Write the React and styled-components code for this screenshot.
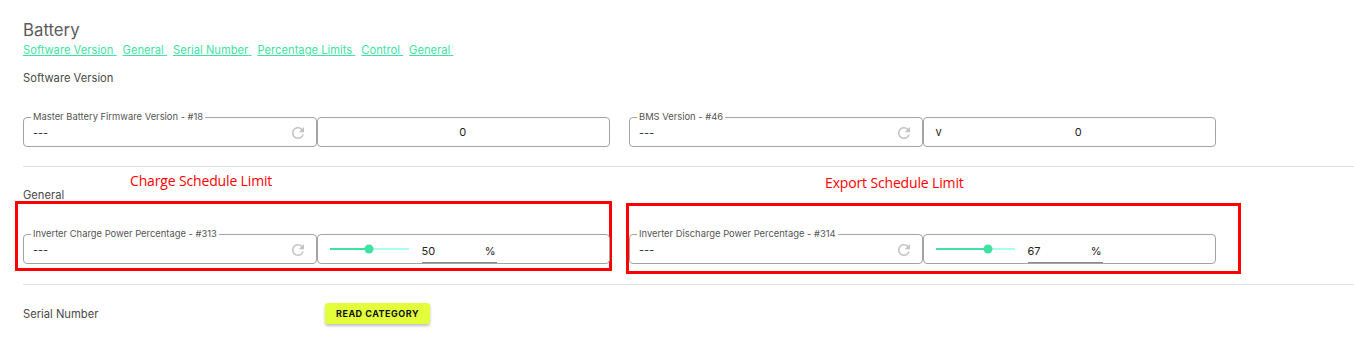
import React from 'react'
import styled, { createGlobalStyle } from 'styled-components'
import { MdRefresh } from 'react-icons/md'

const GlobalStyle = createGlobalStyle`
  body {
    margin: 0;
    background: #ffffff;
    font-family: Inter, 'Open Sans', Arial, sans-serif;
    color: #444;
  }
`

const links = [
  'Software Version',
  'General',
  'Serial Number',
  'Percentage Limits',
  'Control',
  'General',
]

function RefreshField({ label, value }) {
  return (
    <OutlinedBox>
      <Legend>{label}</Legend>
      <Value>{value}</Value>
      <RefreshIcon size={18} />
    </OutlinedBox>
  )
}

function SliderBox({ value }) {
  return (
    <ControlBox>
      <Track>
        <TrackFill style={{ width: `${value}%` }} />
        <Thumb style={{ left: `${value}%` }} />
      </Track>
      <NumberInput>
        <span>{value}</span>
        <span>%</span>
      </NumberInput>
    </ControlBox>
  )
}

function App() {
  return (
    <Page>
      <GlobalStyle />
      <Title>Battery</Title>
      <LinkRow>
        {links.map((l, i) => (
          <Link key={i}>{l}&nbsp;</Link>
        ))}
      </LinkRow>

      <Section>
        <SectionHeading>Software Version</SectionHeading>
        <FieldRow>
          <Group>
            <RefreshField label='Master Battery Firmware Version - #18' value='---' />
            <ControlBox>
              <CenterValue>0</CenterValue>
            </ControlBox>
          </Group>
          <Group>
            <RefreshField label='BMS Version - #46' value='---' />
            <ControlBox>
              <Adornment>v</Adornment>
              <CenterValue>0</CenterValue>
            </ControlBox>
          </Group>
        </FieldRow>
      </Section>
      <Divider />

      <Section>
        <SectionHeading $gap={32}>General</SectionHeading>
        <FieldRow>
          <Group>
            <Annotation $left={-8} $top={-33} $width={597} $height={70} />
            <AnnotationLabel $left={107} $top={-63}>Charge Schedule Limit</AnnotationLabel>
            <RefreshField label='Inverter Charge Power Percentage - #313' value='---' />
            <SliderBox value={50} />
          </Group>
          <Group>
            <Annotation $left={-3} $top={-31} $width={615} $height={71} />
            <AnnotationLabel $left={196} $top={-61}>Export Schedule Limit</AnnotationLabel>
            <RefreshField label='Inverter Discharge Power Percentage - #314' value='---' />
            <SliderBox value={67} />
          </Group>
        </FieldRow>
      </Section>
      <Divider $gap={20} />

      <CategoryRow>
        <CategoryName>Serial Number</CategoryName>
        <ReadButton>Read Category</ReadButton>
      </CategoryRow>
    </Page>
  )
}

export default App

const Page = styled.div`
  padding: 20px 0 20px 23px;
`

const Title = styled.div`
  font-size: 16.8px;
  line-height: 20px;
  color: #5c5c5c;
`

const LinkRow = styled.div`
  display: flex;
  gap: 6px;
  margin-top: 3px;
  line-height: 14px;
`

const Link = styled.a`
  font-size: 11.2px;
  color: #3ee3a3;
  text-decoration: underline;
  cursor: pointer;
`

const Section = styled.div``

const SectionHeading = styled.div`
  font-size: 11.2px;
  line-height: 14px;
  color: #4a4a4a;
  margin-top: ${(p) => (p.$gap ? 21 : 14)}px;
  margin-bottom: ${(p) => p.$gap || 32}px;
`

const FieldRow = styled.div`
  display: flex;
  gap: 19px;
`

const Group = styled.div`
  position: relative;
  display: grid;
  grid-template-columns: 1fr 1fr;
  width: 587px;
`

const OutlinedBox = styled.div`
  position: relative;
  height: 30px;
  box-sizing: border-box;
  border: 1px solid #a3a3a3;
  border-radius: 4px;
  display: flex;
  align-items: center;
  padding: 2px 9px 0 9px;
`

const ControlBox = styled(OutlinedBox)`
  padding: 0 13px 0 12px;
  gap: 13px;
`

const Legend = styled.span`
  position: absolute;
  top: -7px;
  left: 7px;
  padding: 0 2px;
  background: #fff;
  font-size: 9.4px;
  line-height: 12px;
  color: #555;
`

const Value = styled.span`
  flex: 1;
  font-size: 11px;
  color: #333;
`

const RefreshIcon = styled(MdRefresh)`
  color: #c2c2c2;
`

const CenterValue = styled.span`
  flex: 1;
  text-align: center;
  font-size: 11px;
  color: #222;
`

const Adornment = styled.span`
  font-size: 11px;
  color: #222;
`

const Track = styled.div`
  position: relative;
  width: 79px;
  height: 2px;
  background: #a9fbf3;
`

const TrackFill = styled.div`
  height: 100%;
  background: #3ee3a3;
`

const Thumb = styled.div`
  position: absolute;
  top: 50%;
  width: 9px;
  height: 9px;
  border-radius: 50%;
  background: #3ee3a3;
  transform: translate(-50%, -50%);
`

const NumberInput = styled.div`
  display: flex;
  justify-content: space-between;
  width: 75px;
  box-sizing: border-box;
  padding: 2px 1px 4px 0;
  margin-top: 6px;
  border-bottom: 1px solid #8a8a8a;
  font-size: 11px;
  color: #222;
`

const Annotation = styled.div`
  position: absolute;
  left: ${(p) => p.$left}px;
  top: ${(p) => p.$top}px;
  width: ${(p) => p.$width}px;
  height: ${(p) => p.$height}px;
  box-sizing: border-box;
  border: 3px solid #ff0000;
  pointer-events: none;
`

const AnnotationLabel = styled.div`
  position: absolute;
  left: ${(p) => p.$left}px;
  top: ${(p) => p.$top}px;
  font-family: 'Open Sans', sans-serif;
  font-size: 14px;
  letter-spacing: -0.15px;
  line-height: 20px;
  color: #ff0000;
  white-space: nowrap;
`

const Divider = styled.div`
  height: 1px;
  background: #e2e2e2;
  margin-top: ${(p) => p.$gap || 19}px;
`

const CategoryRow = styled.div`
  display: flex;
  align-items: center;
  margin-top: 18px;
`

const CategoryName = styled.div`
  width: 302px;
  font-size: 11.2px;
  color: #4a4a4a;
`

const ReadButton = styled.button`
  width: 105px;
  height: 21px;
  border: none;
  border-radius: 3px;
  background: #e3ff3c;
  box-shadow: 0 2px 3px rgba(0, 0, 0, 0.25);
  font-family: Inter, sans-serif;
  font-size: 9px;
  font-weight: 700;
  letter-spacing: 0.5px;
  text-transform: uppercase;
  color: #111;
  cursor: pointer;
`
